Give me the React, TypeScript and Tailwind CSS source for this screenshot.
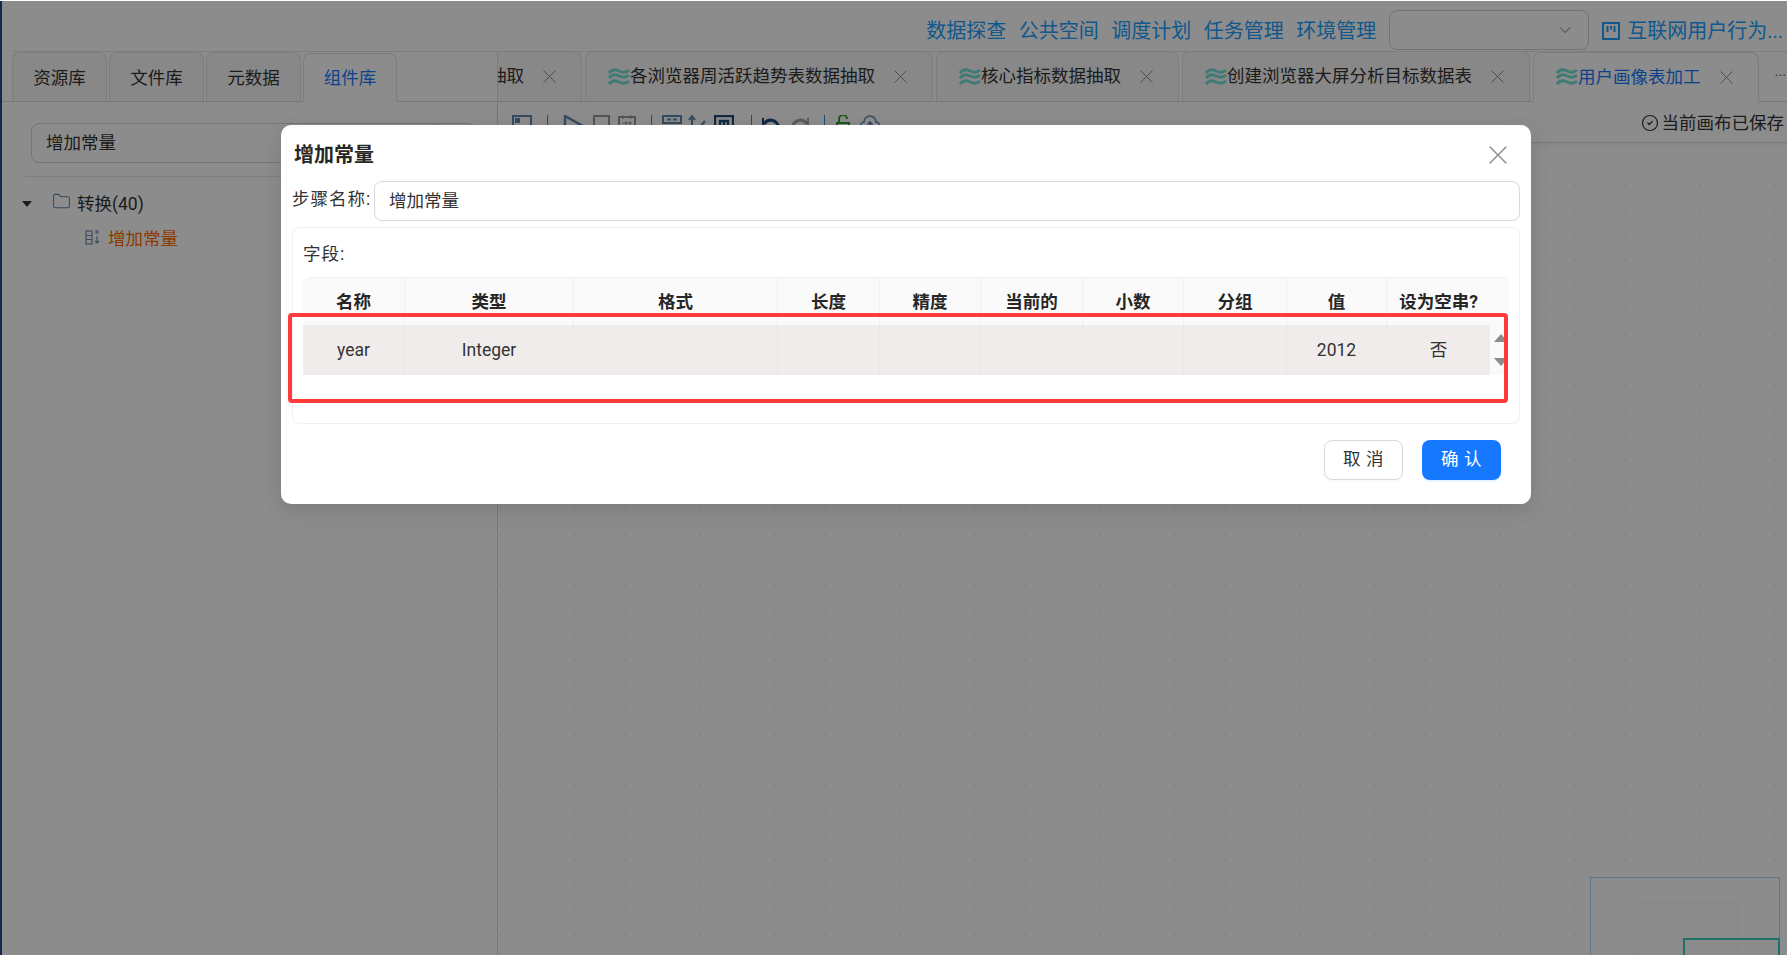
import React from 'react'
import { X, ChevronDown, CircleCheck, Folder } from 'lucide-react'

const Wave = () => (
  <svg width="22" height="18" viewBox="0 0 22 18" fill="none" stroke="#74e0d4" strokeWidth="3" className="shrink-0">
    <path d="M1 5c3-4 6-4 10-2s7 2 10-1" />
    <path d="M1 10c3-4 6-4 10-2s7 2 10-1" />
    <path d="M1 16c3-4 6-4 10-2s7 2 10-1" />
  </svg>
)

const tabs = [
  { name: '各浏览器周活跃趋势表数据抽取', active: false },
  { name: '核心指标数据抽取', active: false },
  { name: '创建浏览器大屏分析目标数据表', active: false },
  { name: '用户画像表加工', active: true },
]

const sideTabs = ['资源库', '文件库', '元数据', '组件库']
const nav = ['数据探查', '公共空间', '调度计划', '任务管理', '环境管理']

const columns = [
  { title: '名称', value: 'year' },
  { title: '类型', value: 'Integer' },
  { title: '格式', value: '' },
  { title: '长度', value: '' },
  { title: '精度', value: '' },
  { title: '当前的', value: '' },
  { title: '小数', value: '' },
  { title: '分组', value: '' },
  { title: '值', value: '2012' },
  { title: '设为空串?', value: '否' },
]

const Toolbar = () => (
  <div className="h-[41px] flex items-start justify-between pt-[13px] pl-[14px] pr-[3px] border-b border-[#dddddd] shadow-[0_2px_4px_rgba(0,0,0,0.06)] bg-white">
    <div className="flex items-start text-[#5f88b0]">
      <svg width="20" height="20" viewBox="0 0 20 20" fill="none" stroke="currentColor" strokeWidth="2">
        <rect x="1" y="1" width="18" height="18" />
        <rect x="4" y="4" width="3" height="3" fill="currentColor" />
        <path d="M1 12h18" />
      </svg>
      <div className="w-px h-[22px] bg-[#2f8fe0] ml-[15px] mr-[15px]" />
      <svg width="20" height="20" viewBox="0 0 20 20" fill="none" stroke="currentColor" strokeWidth="2.4"><path d="M2 1l16 9-16 9z" /></svg>
      <svg width="17" height="20" viewBox="0 0 17 20" fill="none" stroke="#9a9a9a" strokeWidth="2" className="ml-[10px]"><rect x="1" y="1" width="15" height="18" /></svg>
      <svg width="18" height="20" viewBox="0 0 18 20" fill="none" stroke="#9a9a9a" strokeWidth="2" className="ml-[8px]">
        <rect x="1" y="2" width="16" height="16" />
        <path d="M5 0v4M13 0v4M4 8h10M4 12h10M8 6v10M12 6v10" strokeWidth="1" />
      </svg>
      <div className="w-px h-[22px] bg-[#2f8fe0] ml-[15px] mr-[10px]" />
      <svg width="20" height="20" viewBox="0 0 20 20" fill="none" stroke="currentColor" strokeWidth="2">
        <rect x="1" y="1" width="18" height="7" />
        <path d="M5 4.500h4M11 4.500h4M1 12h18" />
      </svg>
      <svg width="18" height="20" viewBox="0 0 18 20" fill="none" stroke="currentColor" strokeWidth="2" className="ml-[6px]"><path d="M4 20V2M1 5l3-4 3 4M7 18L17 6" /></svg>
      <svg width="20" height="20" viewBox="0 0 20 20" fill="none" stroke="#1f4a78" strokeWidth="2.4" className="ml-[8px]">
        <rect x="1" y="1" width="18" height="18" />
        <path d="M6 16V6h8v10M10 6v10" />
      </svg>
      <div className="w-px h-[22px] bg-[#2f8fe0] ml-[17px] mr-[10px]" />
      <svg width="19" height="20" viewBox="0 0 19 20" fill="none" stroke="#1f4a78" strokeWidth="3"><path d="M2 9c4-6 12-5 15 3" /><path d="M1 3v8h8" strokeWidth="2" /></svg>
      <svg width="19" height="20" viewBox="0 0 19 20" fill="none" stroke="#a8a8a8" strokeWidth="3" className="ml-[9px]"><path d="M17 9C13 3 5 4 2 12" /><path d="M18 3v8h-8" strokeWidth="2" /></svg>
      <div className="w-px h-[22px] bg-[#2f8fe0] ml-[15px] mr-[11px]" />
      <svg width="14" height="20" viewBox="0 0 14 20" fill="none" stroke="#2fa52f" strokeWidth="2"><path d="M3 8V4a4 4 0 0 1 8 0" /><rect x="1" y="8" width="12" height="10" /></svg>
      <svg width="20" height="20" viewBox="0 0 20 20" fill="none" stroke="#5f88b0" strokeWidth="1.600" className="ml-[10px]"><path d="M5 15a4 4 0 0 1-1-8 6 6 0 0 1 12 0 4 4 0 0 1-1 8zM10 13V7M7.500 9.500l2.500-2.500 2.500 2.500" /></svg>
    </div>
    <div className="flex items-center -mt-[3px] text-[17.5px] leading-[22px] text-[#333333]">
      <CircleCheck size={18} strokeWidth={1.600} className="mr-[3px]" />
      当前画布已保存
    </div>
  </div>
)

export default function App() {
  return (
    <div className="relative h-[955px] w-[1787px] overflow-hidden bg-white font-['Roboto','Noto_Sans_CJK_SC',sans-serif] text-[#333333]">
      {/* header */}
      <div className="h-[52px] flex items-center justify-end pr-[4px] pt-[10px] border-b border-[#e6e6e6] ml-[12px]">
        <div className="flex gap-[12.5px] text-[20px] leading-[28px] text-[#20a0ff]">
          {nav.map((n) => <span key={n}>{n}</span>)}
        </div>
        <div className="ml-[13px] w-[200px] h-[40px] -mt-[1px] border border-[#cfcfcf] rounded-[8px] flex items-center justify-end pr-[13px] text-[#b5b5b5]">
          <ChevronDown size={20} strokeWidth={1.400} />
        </div>
        <div className="ml-[13px] flex items-center text-[20px] leading-[28px] text-[#20a0ff]">
          <svg width="18" height="18" viewBox="0 0 18 18" fill="none" stroke="currentColor" strokeWidth="2" className="mr-[7px]">
            <rect x="1" y="1" width="16" height="16" />
            <path d="M5.500 4v6M9 4v3.500M12.500 4v6" />
          </svg>
          互联网用户行为...
        </div>
      </div>

      <div className="flex h-[903px]">
        {/* left panel */}
        <aside className="w-[498px] shrink-0 border-r border-[#dcdcdc]">
          <div className="h-[50px] flex items-end gap-[2px] pl-[12px] border-b border-[#d9d9d9]">
            {sideTabs.map((t, i) => (
              <div
                key={t}
                className={i === 3
                  ? 'w-[94px] h-[49px] -mb-px pt-[2px] flex items-center justify-center text-[17.5px] text-[#1677ff] bg-white border border-[#e3e3e3] border-b-white rounded-t-[8px]'
                  : 'w-[95px] h-[49px] pt-[2px] flex items-center justify-center text-[17.5px] bg-[#f8f8f8] border border-[#e3e3e3] border-b-0 rounded-t-[8px]'}
              >
                {t}
              </div>
            ))}
          </div>
          <div className="ml-[31px] mr-[21px] mt-[21px] h-[40px] border border-[#d4d4d4] rounded-[8px] flex items-center justify-between pl-[14px] text-[17.5px]">
            增加常量
            <div className="w-[39px] h-full border-l border-[#d4d4d4]" />
          </div>
          <div className="mt-[13px] ml-[25px] border-t border-[#e6e6e6] pt-[17px]">
            <div className="flex items-center h-[20px]">
              <svg width="10" height="6" viewBox="0 0 10 6" className="ml-[-3px] mr-[20px]"><path d="M0 0h10L5 6z" fill="#333333" /></svg>
              <Folder size={19} strokeWidth={1.300} className="text-[#5f88b0] mr-[6px] -mt-[5px]" />
              <span className="text-[17.5px]">转换(40)</span>
            </div>
            <div className="flex items-center h-[20px] mt-[15px] pl-[60px]">
              <svg width="15" height="15" viewBox="0 0 15 15" fill="none" stroke="#6f8db0" strokeWidth="1.200" className="mr-[8px] -mt-[4px]">
                <rect x="1" y="1" width="6" height="13" />
                <path d="M1 5.500h6M1 9.500h6M12 6v7M10 11l2 2 2-2M11 1h2v2h-2z" />
              </svg>
              <span className="text-[17.5px] text-[#ff6a00]">增加常量</span>
            </div>
          </div>
        </aside>

        {/* canvas side */}
        <div className="flex-1 min-w-0 flex flex-col">
          <div className="h-[50px] flex items-end gap-[3px] border-b border-[#d9d9d9]">
            <div className="w-[84px] h-[50px] shrink-0 overflow-hidden flex items-center justify-end pr-[20px] text-[17.5px] bg-[#f8f8f8] border border-l-0 border-b-0 border-[#e3e3e3] rounded-tr-[8px]">
              <span className="shrink-0">抽取</span>
              <X size={23} strokeWidth={1} className="ml-[14px] shrink-0 text-[#8a8a8a]" />
            </div>
            {tabs.map((t) => (
              <div
                key={t.name}
                className={t.active
                  ? 'h-[50px] -mb-px shrink-0 flex items-center pl-[22px] pr-[20px] text-[17.5px] text-[#1677ff] bg-white border border-[#e3e3e3] border-b-white rounded-t-[8px]'
                  : 'h-[50px] shrink-0 flex items-center pl-[22px] pr-[20px] text-[17.5px] bg-[#f8f8f8] border border-b-0 border-[#e3e3e3] rounded-t-[8px]'}
              >
                <Wave />
                <span>{t.name}</span>
                <X size={23} strokeWidth={1} className="ml-[14px] text-[#8a8a8a]" />
              </div>
            ))}
            <span className="self-center ml-[13px] text-[#555555] text-[15px] whitespace-nowrap">···</span>
          </div>
          <Toolbar />
          <div className="relative flex-1 bg-[radial-gradient(circle_at_center,#c4c4c4_0.8px,transparent_1px)] bg-[size:25px_25px] bg-[position:14.500px_4.500px]">
            {/* minimap */}
            <div className="absolute left-[1092px] top-[734px] w-[190px] h-[120px] bg-white border border-[#a9d4fa]">
              <div className="absolute left-[43px] top-[25px] w-[103px] h-[90px] bg-[#fdfdfd] shadow-[0_0_2px_rgba(0,0,0,0.08)]" />
              <div className="absolute left-[92px] top-[60px] w-[97px] h-[60px] border-2 border-[#36d2bd]" />
            </div>
          </div>
        </div>
      </div>

      {/* modal mask */}
      <div className="absolute inset-0 top-[1px] bg-black/45 border-l-2 border-[#0f2a4a]" />

      {/* modal */}
      <div className="absolute left-[281px] top-[125px] w-[1250px] h-[379px] bg-white rounded-[10px] shadow-[0_6px_20px_rgba(0,0,0,0.12)] flex flex-col">
        <div className="h-[56px] flex items-center justify-between pl-[13px] pr-[17px] pt-[4px]">
          <span className="text-[20px] font-bold text-[#262626]">增加常量</span>
          <X size={32} strokeWidth={1} className="text-[#8c8c8c]" />
        </div>
        <div className="flex items-center pl-[11px] pr-[11px]">
          <span className="text-[17.5px] tracking-[1px] w-[82px] shrink-0 whitespace-nowrap -mt-[4px]">步骤名称:</span>
          <div className="flex-1 h-[40px] border border-[#d9d9d9] rounded-[8px] flex items-center pl-[14px] text-[17.5px]">增加常量</div>
        </div>
        <div className="ml-[11px] mr-[11px] mt-[6px] h-[197px] border border-[#f0f0f0] rounded-[8px] pl-[10px] pr-[10px] pt-[14px]">
          <div className="text-[17.5px] leading-[24px] tracking-[1px]">字段:</div>
          <div className="mt-[11px]">
            <div className="grid grid-cols-[102px_169px_204px_102px_101px_102px_101px_103px_100px_103px_18px] h-[48px] bg-[#fafafa] rounded-t-[8px] border-t border-[#f0f0f0]">
              {columns.map((c) => (
                <div key={c.title} className="border-r border-[#f0f0f0] [&:nth-child(10)]:border-r-0 text-center text-[17.5px] font-bold text-[#262626] pt-[12px] leading-[24px] whitespace-nowrap">{c.title}</div>
              ))}
            </div>
            <div className="flex">
              <div className="grid grid-cols-[102px_169px_204px_102px_101px_102px_101px_103px_100px_103px] w-[1187px] h-[50px] bg-[#f1ecec]">
                {columns.map((c) => (
                  <div key={c.title} className="border-r border-[#ece7e7] last:border-r-0 flex items-center justify-center text-[17.5px] text-[#333333]">{c.value}</div>
                ))}
              </div>
              <div className="w-[18px] h-[50px] bg-[#fafafa] flex flex-col items-center justify-between py-[9px] pl-[4px]">
                <svg width="14" height="8" viewBox="0 0 14 8"><path d="M7 0l7 8H0z" fill="#8c8c8c" /></svg>
                <svg width="14" height="8" viewBox="0 0 14 8"><path d="M0 0h14L7 8z" fill="#8c8c8c" /></svg>
              </div>
            </div>
          </div>
        </div>
        <div className="flex justify-end gap-[19px] pr-[30px] mt-[16px]">
          <button type="button" className="w-[79px] h-[40px] pb-[2px] border border-[#d9d9d9] rounded-[8px] bg-white text-[17.5px] tracking-[0.5px] shadow-[0_2px_0_rgba(0,0,0,0.02)]">取 消</button>
          <button type="button" className="w-[79px] h-[40px] pb-[2px] rounded-[8px] bg-[#1677ff] text-white text-[17.5px] tracking-[0.5px] shadow-[0_2px_0_rgba(5,145,255,0.1)]">确 认</button>
        </div>
      </div>

      {/* red annotation */}
      <div className="absolute left-[288px] top-[313px] w-[1220px] h-[90px] border-[4px] border-[#ff3b3b] rounded-[4px]" />
    </div>
  )
}
